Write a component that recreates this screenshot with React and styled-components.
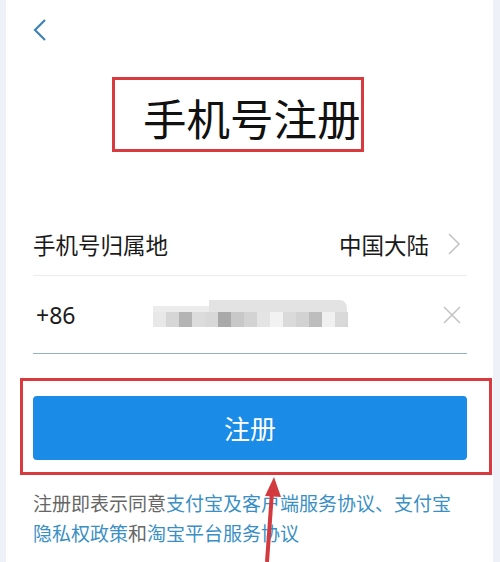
import React from "react";
import styled, { createGlobalStyle } from "styled-components";

const Global = createGlobalStyle`
  html, body { margin: 0; padding: 0; }
  body {
    background: #eef1f7;
    font-family: "Noto Sans CJK SC", "Noto Sans", sans-serif;
    -webkit-font-smoothing: antialiased;
  }
`;

const Page = styled.div`
  position: relative;
  margin: 0 7px 0 6px;
  height: 562px;
  overflow: hidden;
  background: #fff;
  padding: 0 26px 0 27px;
  box-sizing: border-box;
`;

const Header = styled.div`
  height: 62px;
  display: flex;
  align-items: center;
  padding-bottom: 2px;
  box-sizing: border-box;
`;

const BackButton = styled.button`
  border: 0;
  background: none;
  padding: 0;
  width: 14px;
  height: 24px;
  display: flex;
  cursor: pointer;
`;

const TitleWrap = styled.div`
  position: relative;
  margin-top: 26px;
  height: 60px;
  padding-left: 110px;
`;

const Title = styled.h1`
  margin: 0;
  font-size: 43.5px;
  line-height: 60px;
  font-weight: 400;
  color: #111;
`;

const Annotation = styled.div`
  position: absolute;
  border: 3px solid #d83a40;
  box-sizing: border-box;
  pointer-events: none;
  left: ${(p) => p.$l}px;
  top: ${(p) => p.$t}px;
  width: ${(p) => p.$w}px;
  height: ${(p) => p.$h}px;
`;

const Form = styled.div`
  margin-top: 65px;
  display: flex;
  flex-direction: column;
`;

const Row = styled.div`
  display: flex;
  align-items: center;
  height: ${(p) => p.$h}px;
  border-bottom: ${(p) => p.$line};
  box-sizing: border-box;
`;

const Label = styled.span`
  font-size: 22.5px;
  color: #1a1a1a;
  flex: 1;
`;

const Value = styled.span`
  font-size: 22.5px;
  color: #1a1a1a;
  margin-right: 18px;
`;

const Prefix = styled.span`
  font-size: 23px;
  color: #1a1a1a;
  width: 117px;
  padding-left: 3px;
  font-family: "Noto Sans", "Noto Sans CJK SC", sans-serif;
`;

const Masked = styled.div`
  flex: 1;
  display: flex;
  align-items: center;
`;

const IconBox = styled.span`
  display: flex;
  width: ${(p) => p.$w}px;
  justify-content: flex-end;
  margin-right: 6px;
`;

const ButtonWrap = styled.div`
  position: relative;
  margin-top: 42px;
`;

const Submit = styled.button`
  width: 100%;
  height: 64px;
  border: 0;
  border-radius: 4px;
  background: #1a8be6;
  color: #fff;
  font-family: "Noto Sans CJK SC", sans-serif;
  font-size: 26px;
  display: flex;
  align-items: center;
  justify-content: center;
  padding-bottom: 3px;
`;

const Agreement = styled.div`
  margin-top: 28px;
  display: flex;
  flex-direction: column;
`;

const Line = styled.p`
  margin: 0;
  font-size: 19px;
  line-height: 30px;
  color: #666;
  white-space: nowrap;
`;

const Link = styled.span`
  color: #3a8fc4;
`;

const ArrowSvg = styled.svg`
  position: absolute;
  left: 0;
  top: 0;
  pointer-events: none;
`;

const mosaic = [
  "#e8e8e8", "#d6d6d6", "#b4b4b4", "#dcdcdc", "#d8d8d8", "#a9a9a9", "#c8c8c8",
  "#d3d3d3", "#e4e4e4", "#f2f2f2", "#dadada", "#d2d2d2", "#bdbdbd", "#f0f0f0", "#d6d6d6",
];

export default function App() {
  return (
    <>
      <Global />
      <Page>
        <Header>
          <BackButton aria-label="back">
            <svg width="14" height="24" viewBox="0 0 14 24">
              <polyline points="12,2 2,12 12,22" fill="none" stroke="#3f83b6" strokeWidth="2.2" />
            </svg>
          </BackButton>
        </Header>
        <TitleWrap>
          <Title>手机号注册</Title>
          <Annotation $l={79} $t={-11} $w={252} $h={75} />
        </TitleWrap>
        <Form>
          <Row $h={63} $line="1px solid #ececec">
            <Label>手机号归属地</Label>
            <Value>中国大陆</Value>
            <IconBox $w={14}>
              <svg width="14" height="24" viewBox="0 0 14 24">
                <polyline points="2,2 12,12 2,22" fill="none" stroke="#c4c4c4" strokeWidth="1.6" />
              </svg>
            </IconBox>
          </Row>
          <Row $h={78} $line="1.5px solid #8fb4c4">
            <Prefix>+86</Prefix>
            <Masked>
              <svg width="196" height="30" viewBox="0 0 196 30">
                <path d="M56 0 H186 Q194 0 194 9 V12 H56 Z" fill="#e3e3e3" />
                <rect x="0" y="6" width="56" height="7" fill="#ececec" />
                {mosaic.map((c, i) => (
                  <rect key={i} x={i * 13} y={12} width={13} height={15} fill={c} />
                ))}
                <path d="M182 12 H194 V20 Q194 27 186 27 H182 Z" fill="#d9d9d9" />
              </svg>
            </Masked>
            <IconBox $w={20}>
              <svg width="18" height="18" viewBox="0 0 18 18">
                <path d="M1 1 L17 17 M17 1 L1 17" stroke="#c4c4c4" strokeWidth="1.6" />
              </svg>
            </IconBox>
          </Row>
        </Form>
        <ButtonWrap>
          <Submit>注册</Submit>
          <Annotation $l={-13} $t={-18} $w={472} $h={97} />
        </ButtonWrap>
        <Agreement>
          <Line>
            注册即表示同意<Link>支付宝及客户端服务协议、支付宝</Link>
          </Line>
          <Line>
            <Link>隐私权政策</Link>和<Link>淘宝平台服务协议</Link>
          </Line>
        </Agreement>
        <ArrowSvg width="487" height="562" viewBox="0 0 487 562">
          <line x1="261" y1="562" x2="266" y2="492" stroke="#d23a3f" strokeWidth="4" />
          <polygon points="268,477 259,496 275,497" fill="#d23a3f" />
        </ArrowSvg>
      </Page>
    </>
  );
}
